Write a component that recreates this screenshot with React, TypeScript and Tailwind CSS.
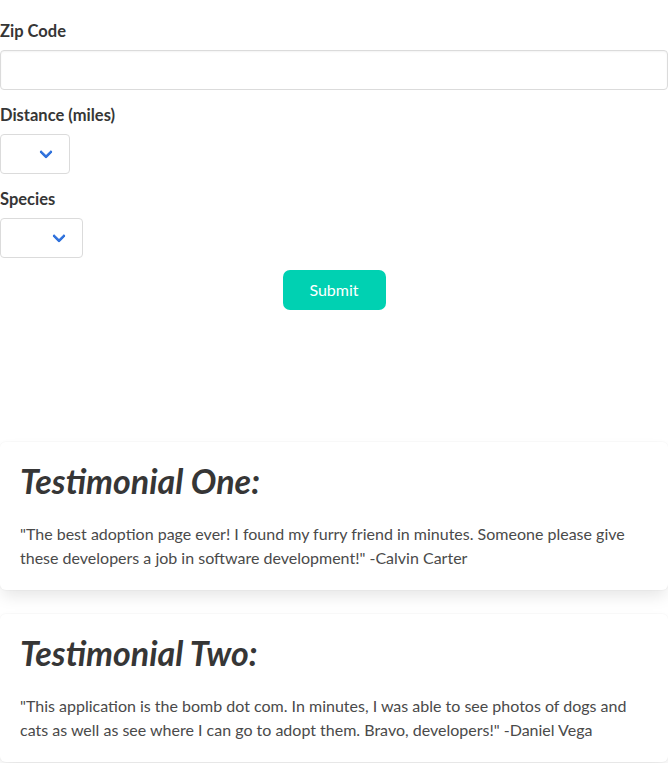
import React from "react";

function Chevron() {
  return (
    <span className="pointer-events-none absolute right-[18px] top-1/2 mt-[-7px] block h-[10px] w-[10px] -rotate-45 rounded-[2px] border-b-[3px] border-l-[3px] border-[#3273dc]" />
  );
}

function SelectBox({ width }: { width: string }) {
  return (
    <div className={`relative h-10 ${width} rounded-[4px] border border-[#dbdbdb] bg-white`}>
      <Chevron />
    </div>
  );
}

export default function App() {
  return (
    <div className="min-h-screen bg-white font-['Lato','Noto_Sans',sans-serif] text-base leading-6 text-[#4a4a4a]">
      <form className="pt-[18px]" onSubmit={(e) => e.preventDefault()}>
        <div className="mb-3">
          <label className="mb-[7px] block pt-px text-[16.5px] font-bold text-[#363636]">Zip Code</label>
          <input
            type="text"
            className="block h-10 w-full rounded-[4px] border border-[#dbdbdb] bg-white px-3 shadow-[inset_0_1px_2px_rgba(10,10,10,0.05)] outline-none"
          />
        </div>
        <div className="mb-3">
          <label className="mb-[7px] block pt-px text-[16.5px] font-bold text-[#363636]">Distance (miles)</label>
          <SelectBox width="w-[70px]" />
        </div>
        <div className="mb-3">
          <label className="mb-[7px] block pt-px text-[16.5px] font-bold text-[#363636]">Species</label>
          <SelectBox width="w-[83px]" />
        </div>
        <div className="flex justify-center">
          <button
            type="submit"
            className="h-10 w-[103px] rounded-[7px] bg-[#00d1b2] text-white"
          >
            Submit
          </button>
        </div>
      </form>

      <div className="mt-[132px]">
        <div className="mb-6 rounded-[6px] bg-white p-5 shadow-[0_8px_16px_-2px_rgba(10,10,10,0.1),0_0_0_1px_rgba(10,10,10,0.02)]">
          <h3 className="mb-6 pt-px text-[34px] font-bold italic leading-[35px] text-[#363636]">
            Testimonial One:
          </h3>
          <p>
            "The best adoption page ever! I found my furry friend in minutes. Someone please give these developers a job in software development!" -Calvin Carter
          </p>
        </div>
        <div className="mb-6 rounded-[6px] bg-white p-5 shadow-[0_8px_16px_-2px_rgba(10,10,10,0.1),0_0_0_1px_rgba(10,10,10,0.02)]">
          <h3 className="mb-6 pt-px text-[34px] font-bold italic leading-[35px] text-[#363636]">
            Testimonial Two:
          </h3>
          <p>
            "This application is the bomb dot com. In minutes, I was able to see photos of dogs and cats as well as see where I can go to adopt them. Bravo, developers!" -Daniel Vega
          </p>
        </div>
      </div>
    </div>
  );
}
